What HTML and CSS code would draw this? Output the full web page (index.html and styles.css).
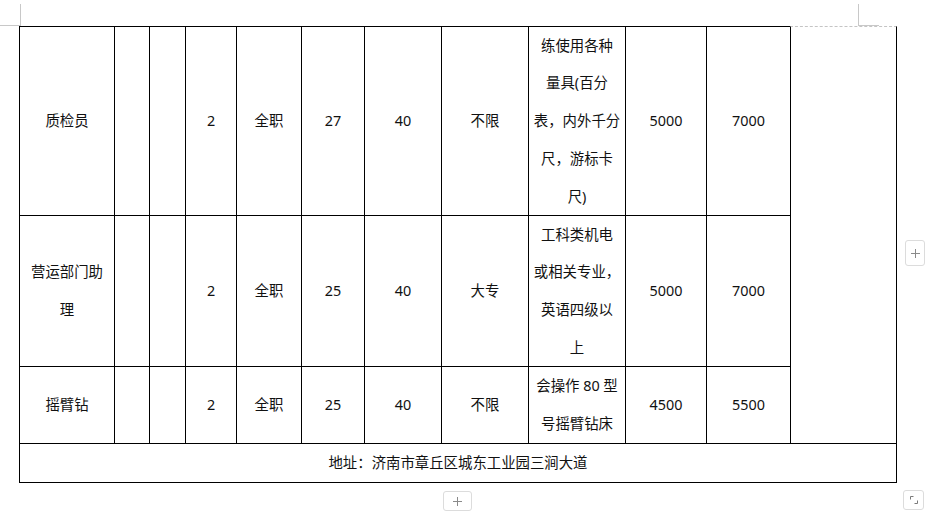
FILE: index.html
```html
<!DOCTYPE html>
<html lang="zh-CN">
<head>
<meta charset="utf-8">
<title>招聘表</title>
<link rel="stylesheet" href="styles.css">
</head>
<body>
<div class="page">
  <div class="mark mark-left"></div>
  <div class="mark mark-right"></div>

  <div class="sheet">
    <div class="cell">质检员</div>
    <div class="cell"></div>
    <div class="cell"></div>
    <div class="cell">2</div>
    <div class="cell">全职</div>
    <div class="cell">27</div>
    <div class="cell">40</div>
    <div class="cell">不限</div>
    <div class="cell">练使用各种<br>量具(百分<br>表，内外千分<br>尺，游标卡<br>尺)</div>
    <div class="cell">5000</div>
    <div class="cell">7000</div>
    <div class="cell side"></div>

    <div class="cell">营运部门助<br>理</div>
    <div class="cell"></div>
    <div class="cell"></div>
    <div class="cell">2</div>
    <div class="cell">全职</div>
    <div class="cell">25</div>
    <div class="cell">40</div>
    <div class="cell">大专</div>
    <div class="cell">工科类机电<br>或相关专业，<br>英语四级以<br>上</div>
    <div class="cell">5000</div>
    <div class="cell">7000</div>

    <div class="cell">摇臂钻</div>
    <div class="cell"></div>
    <div class="cell"></div>
    <div class="cell">2</div>
    <div class="cell">全职</div>
    <div class="cell">25</div>
    <div class="cell">40</div>
    <div class="cell">不限</div>
    <div class="cell">会操作 80 型<br>号摇臂钻床</div>
    <div class="cell">4500</div>
    <div class="cell">5500</div>

    <div class="cell address">地址：济南市章丘区城东工业园三涧大道</div>
  </div>

  <div class="tool tool-right">
    <svg width="9" height="9" viewBox="0 0 9 9"><path d="M4.5 0v9M0 4.5h9" stroke="#8a8a8a" stroke-width="1" fill="none"/></svg>
  </div>
  <div class="tool tool-bottom">
    <svg width="9" height="9" viewBox="0 0 9 9"><path d="M4.5 0v9M0 4.5h9" stroke="#8a8a8a" stroke-width="1" fill="none"/></svg>
  </div>
  <div class="tool tool-resize">
    <svg width="8" height="8" viewBox="0 0 8 8"><path d="M0.5 3.5v-3h3M7.5 4.5v3h-3" stroke="#7a7a7a" stroke-width="1" fill="none"/></svg>
  </div>
</div>
</body>
</html>
```

FILE: styles.css
```css
* { box-sizing: border-box; }

html, body {
  margin: 0;
  padding: 0;
  background: #ffffff;
}

.page {
  position: relative;
  width: 928px;
  height: 512px;
  overflow: hidden;
  padding: 26px 0 0 19px;
  font-family: "Noto Sans", "Noto Sans CJK SC", sans-serif;
  font-size: 14.4px;
  color: #111;
}

.sheet {
  display: grid;
  grid-template-columns: 95px 35px 36px 51px 65px 63px 77px 87px 97px 81px 84px 107px;
  grid-template-rows: 189px 151px 77px 40px;
  width: 878px;
}

.cell {
  border-left: 1px solid #000;
  border-top: 1px solid #000;
  display: flex;
  align-items: center;
  justify-content: center;
  text-align: center;
  line-height: 37.75px;
  white-space: nowrap;
}

.side {
  grid-column: 12;
  grid-row: 1 / 4;
  border-top: 1px dashed #c4c4c4;
  border-right: 1px solid #000;
}

.address {
  grid-column: 1 / -1;
  border-right: 1px solid #000;
  border-bottom: 1px solid #000;
  line-height: 20px;
}

.mark {
  position: absolute;
  top: 4px;
  width: 21px;
  height: 22px;
  border-bottom: 1px solid #c8c8c8;
}

.mark-left {
  left: 0;
  border-right: 1px solid #c8c8c8;
}

.mark-right {
  left: 858px;
  border-left: 1px solid #c8c8c8;
}

.tool {
  position: absolute;
  display: flex;
  align-items: center;
  justify-content: center;
  border: 1px solid #dcdcdc;
  border-radius: 3px;
  background: #fff;
}

.tool-right {
  left: 905px;
  top: 240px;
  width: 20px;
  height: 26px;
}

.tool-bottom {
  left: 443px;
  top: 491px;
  width: 29px;
  height: 20px;
}

.tool-resize {
  left: 903px;
  top: 490px;
  width: 21px;
  height: 20px;
}
```
